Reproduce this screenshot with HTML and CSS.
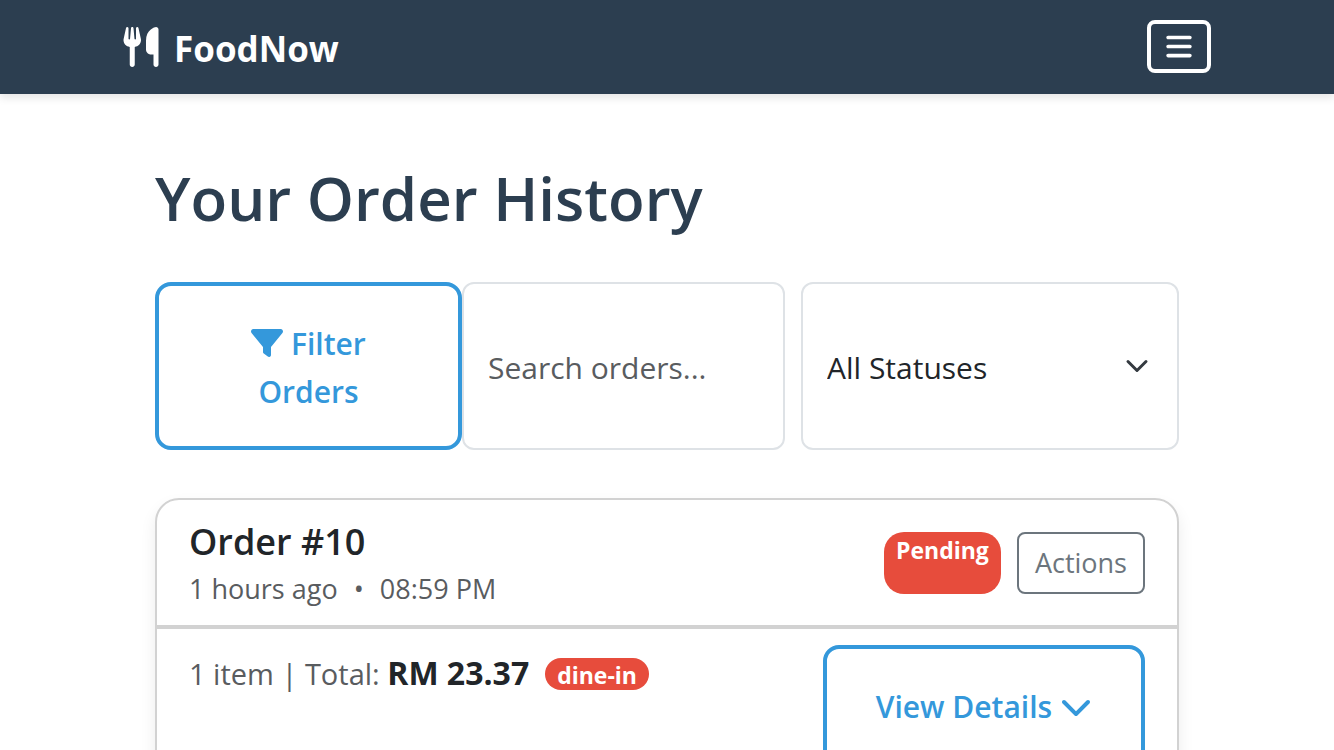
FILE: index.html
```html
<!DOCTYPE html>
<html lang="en">
<head>
<meta charset="utf-8">
<meta name="viewport" content="width=device-width, initial-scale=1">
<title>FoodNow - Your Order History</title>
<link rel="stylesheet" href="styles.css">
</head>
<body>
<header class="navbar">
  <div class="navbar-inner">
    <a class="brand" href="#">
      <svg class="brand-icon" viewBox="0 0 448 512" fill="currentColor" aria-hidden="true"><path d="M416 0C400 0 288 32 288 176V288c0 35.3 28.7 64 64 64h32V480c0 17.7 14.3 32 32 32s32-14.3 32-32V352 240 32c0-17.7-14.3-32-32-32zM64 16C64 7.8 57.9 1 49.7 .1S34.2 4.6 32.4 12.5L2.1 148.8C.7 155.1 0 161.5 0 167.9c0 45.9 35.1 83.6 80 87.7V480c0 17.7 14.3 32 32 32s32-14.3 32-32V255.6c44.9-4.1 80-41.8 80-87.7c0-6.4-.7-12.8-2.1-19.1L191.6 12.5c-1.8-8-9.3-13.3-17.4-12.4S160 7.8 160 16V150.2c0 5.4-4.4 9.8-9.8 9.8c-5.1 0-9.3-3.9-9.8-9L127.9 14.6C127.2 6.3 120.3 0 112 0s-15.2 6.3-15.9 14.6L83.7 151c-.5 5.1-4.7 9-9.8 9c-5.4 0-9.8-4.4-9.8-9.8V16z"/></svg>
      <span class="brand-name">FoodNow</span>
    </a>
    <button class="menu-toggle" type="button" aria-label="Toggle navigation">
      <svg class="menu-icon" viewBox="0 0 448 512" fill="currentColor" aria-hidden="true"><path d="M0 96C0 78.300 14.300 64 32 64H416c17.700 0 32 14.300 32 32s-14.300 32-32 32H32C14.300 128 0 113.700 0 96zM0 256c0-17.700 14.300-32 32-32H416c17.700 0 32 14.300 32 32s-14.300 32-32 32H32c-17.700 0-32-14.300-32-32zM448 416c0 17.700-14.300 32-32 32H32c-17.700 0-32-14.300-32-32s14.300-32 32-32H416c17.700 0 32 14.300 32 32z"/></svg>
    </button>
  </div>
</header>

<main class="page">
  <h1 class="page-title">Your Order History</h1>

  <form class="filters">
    <button class="btn-outline filter-button" type="button">
      <svg class="icon filter-icon" viewBox="0 0 512 512" fill="currentColor" aria-hidden="true"><path d="M3.900 54.900C10.500 40.900 24.500 32 40 32H472c15.500 0 29.500 8.900 36.100 22.900s4.600 30.500-5.200 42.500L320 320.900V448c0 12.100-6.800 23.200-17.700 28.600s-23.800 4.300-33.500-3l-64-48c-8.100-6-12.800-15.500-12.800-25.600V320.900L9 97.300C-.7 85.400-2.800 68.800 3.900 54.900z"/></svg>
      Filter Orders
    </button>
    <input class="field search-field" type="text" placeholder="Search orders..." aria-label="Search orders">
    <select class="field status-field" aria-label="Order status">
      <option>All Statuses</option>
      <option>Pending</option>
      <option>Completed</option>
    </select>
  </form>

  <article class="order-card">
    <header class="order-header">
      <div>
        <h2 class="order-title">Order #10</h2>
        <p class="order-time"><span>1 hours ago</span><span>•</span><span>08:59 PM</span></p>
      </div>
      <div class="order-actions">
        <span class="badge badge-status">Pending</span>
        <button class="btn-actions" type="button">Actions</button>
      </div>
    </header>
    <div class="order-body">
      <div class="order-summary">
        <span>1 item | Total: <strong class="order-total">RM 23.37</strong></span>
        <span class="badge badge-type">dine-in</span>
      </div>
      <button class="btn-outline details-button" type="button">
        View Details
        <svg class="icon" viewBox="0 0 512 512" fill="currentColor" aria-hidden="true"><path d="M233.400 406.600c12.500 12.500 32.800 12.500 45.300 0l192-192c12.500-12.500 12.500-32.800 0-45.300s-32.800-12.500-45.300 0L256 338.700 86.600 169.400c-12.500-12.500-32.800-12.500-45.300 0s-12.500 32.800 0 45.300l192 192z"/></svg>
      </button>
    </div>
  </article>
</main>
</body>
</html>
```
FILE: styles.css
```css
* {
  box-sizing: border-box;
}

body {
  margin: 0;
  background: #fff;
  color: #212529;
  font-family: "Open Sans", "Noto Sans", sans-serif;
  font-size: 30px;
  line-height: 48px;
}

button,
input,
select {
  margin: 0;
  font: inherit;
}

.navbar {
  padding: 20px 64px 21px;
  background: #2c3e50;
  box-shadow: 0 4px 8px rgba(0, 0, 0, 0.1);
}

.navbar-inner {
  display: flex;
  align-items: center;
  justify-content: space-between;
  max-width: 1088px;
  margin: 0 auto;
}

.brand {
  display: flex;
  align-items: center;
  gap: 15px;
  color: #fff;
  font-size: 35px;
  font-weight: 700;
  text-decoration: none;
}

.brand-icon {
  width: 36px;
  height: 40px;
}

.brand-name {
  padding-top: 4px;
}

.menu-toggle {
  display: flex;
  align-items: center;
  justify-content: center;
  width: 64px;
  height: 53px;
  padding: 0;
  border: 4px solid #fff;
  border-radius: 8px;
  background: transparent;
  color: #fff;
}

.menu-icon {
  width: 26px;
  height: 29px;
}

.page {
  max-width: 1088px;
  margin: 0 auto;
  padding: 66px 32px 64px;
}

.page-title {
  margin: 0 0 46px;
  color: #2c3e50;
  font-size: 60px;
  font-weight: 600;
  line-height: 76px;
}

.filters {
  display: grid;
  grid-template-columns: 307fr 323fr 394fr;
  margin-bottom: 48px;
}

.btn-outline {
  border: 4px solid #3498db;
  border-radius: 16px;
  background: transparent;
  color: #3498db;
  font-weight: 600;
}

.icon {
  width: 32px;
  height: 32px;
  vertical-align: -4px;
}

.filter-button {
  padding: 34px 80px 30px;
}

.field {
  min-width: 0;
  padding: 4px 24px 0;
  border: 2px solid #dee2e6;
  border-radius: 12px;
  background-color: #fff;
  color: #212529;
}

.field::placeholder {
  color: #595c5f;
  opacity: 1;
}

.status-field {
  margin-left: 16px;
  appearance: none;
  background-image: url("data:image/svg+xml,%3Csvg xmlns='http://www.w3.org/2000/svg' viewBox='0 0 16 16'%3E%3Cpath fill='none' stroke='%23343a40' stroke-linecap='round' stroke-linejoin='round' stroke-width='2' d='m2 5 6 6 6-6'/%3E%3C/svg%3E");
  background-repeat: no-repeat;
  background-position: right 28px center;
  background-size: 24px 24px;
}

.order-card {
  border: 2px solid #d2d2d2;
  border-radius: 24px;
  background: #fff;
  box-shadow: 0 8px 16px rgba(0, 0, 0, 0.08);
}

.order-header {
  display: flex;
  align-items: center;
  justify-content: space-between;
  padding: 16px 32px;
  border-bottom: 4px solid #d2d2d2;
}

.order-title {
  margin: 0;
  font-size: 36px;
  font-weight: 600;
  line-height: 52px;
}

.order-time {
  display: flex;
  gap: 16px;
  margin: 0;
  color: #595c5f;
  font-size: 27px;
  line-height: 41px;
}

.order-actions {
  display: flex;
  gap: 16px;
}

.badge {
  border-radius: 20px;
  background: #e74c3c;
  color: #fff;
  font-size: 23px;
  font-weight: 700;
}

.badge-status {
  padding: 4px 12px;
  line-height: 28px;
}

.badge-type {
  padding: 2px 12px 0;
  line-height: 30px;
}

.btn-actions {
  height: 62px;
  padding: 0 16px;
  border: 2px solid #6c757d;
  border-radius: 8px;
  background: transparent;
  color: #6c757d;
  font-size: 27px;
}

.order-body {
  display: flex;
  align-items: flex-start;
  justify-content: space-between;
  padding: 16px 32px;
}

.order-summary {
  display: flex;
  align-items: center;
  gap: 16px;
  padding-top: 4px;
  color: #595c5f;
  font-size: 29px;
}

.order-total {
  color: #212529;
  font-size: 32px;
}

.details-button {
  padding: 34px 49px;
}
```
